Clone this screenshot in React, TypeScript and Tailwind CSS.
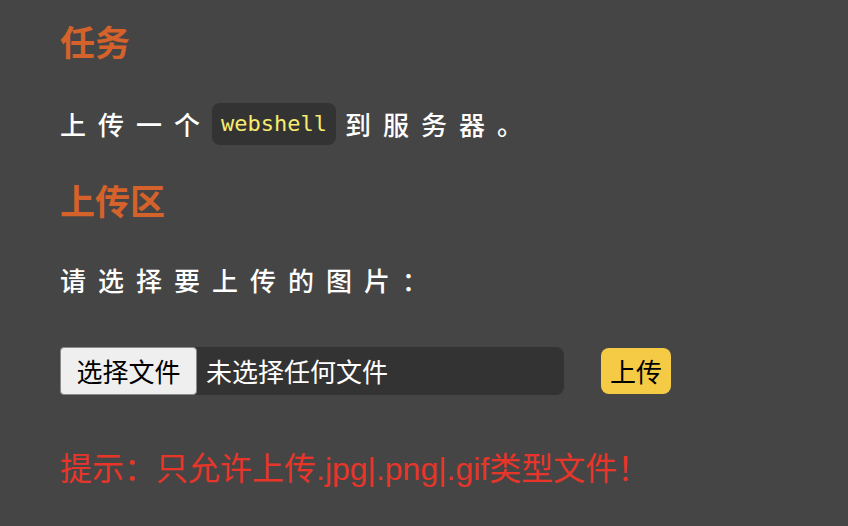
import React from "react";

const cjk = "font-['PingFang_SC','Noto_Sans_CJK_SC',sans-serif]";

const App = () => {
  return (
    <div className={`min-h-screen bg-[#454545] px-[60px] pt-[21px] ${cjk}`}>
      <h2 className="text-[35px] leading-[40px] font-bold text-[#d4622a]">任务</h2>

      <p className="mt-[42px] text-[26px] leading-[42px] tracking-[12px] text-white font-medium flex items-center">
        <span>上传一个</span>
        <code className="inline-block h-[42px] px-[9px] rounded-lg bg-[#333] text-[#f7ec6f] tracking-normal font-normal font-['DejaVu_Sans_Mono',monospace] text-[22px] leading-[42px] mr-[9px]">
          webshell
        </code>
        <span>到服务器。</span>
      </p>

      <h2 className="mt-[35px] text-[35px] leading-[40px] font-bold text-[#d4622a]">上传区</h2>

      <p className="mt-[45px] text-[26px] leading-[30px] tracking-[12px] text-white font-medium">
        请选择要上传的图片：
      </p>

      <div className="mt-[52px] flex items-center">
        <div className="flex items-center w-[504px] h-[48px] bg-[#333] rounded-lg">
          <button className="h-[48px] w-[137px] bg-[#efefef] border border-[#8a8a8a] rounded-[4px] text-black text-[26px] leading-none">
            选择文件
          </button>
          <span className="ml-[9px] text-white text-[26px] leading-none">未选择任何文件</span>
        </div>
        <button className="ml-[37px] h-[46px] w-[70px] bg-[#f5cb45] rounded-lg text-black text-[26px] leading-none">
          上传
        </button>
      </div>

      <p className="mt-[55px] text-[32px] leading-[38px] text-[#e8352a] font-['PingFang_SC','Liberation_Sans','Noto_Sans_CJK_SC',sans-serif]">
        提示：只允许上传.jpg|.png|.gif类型文件！
      </p>
    </div>
  );
};

export default App;
